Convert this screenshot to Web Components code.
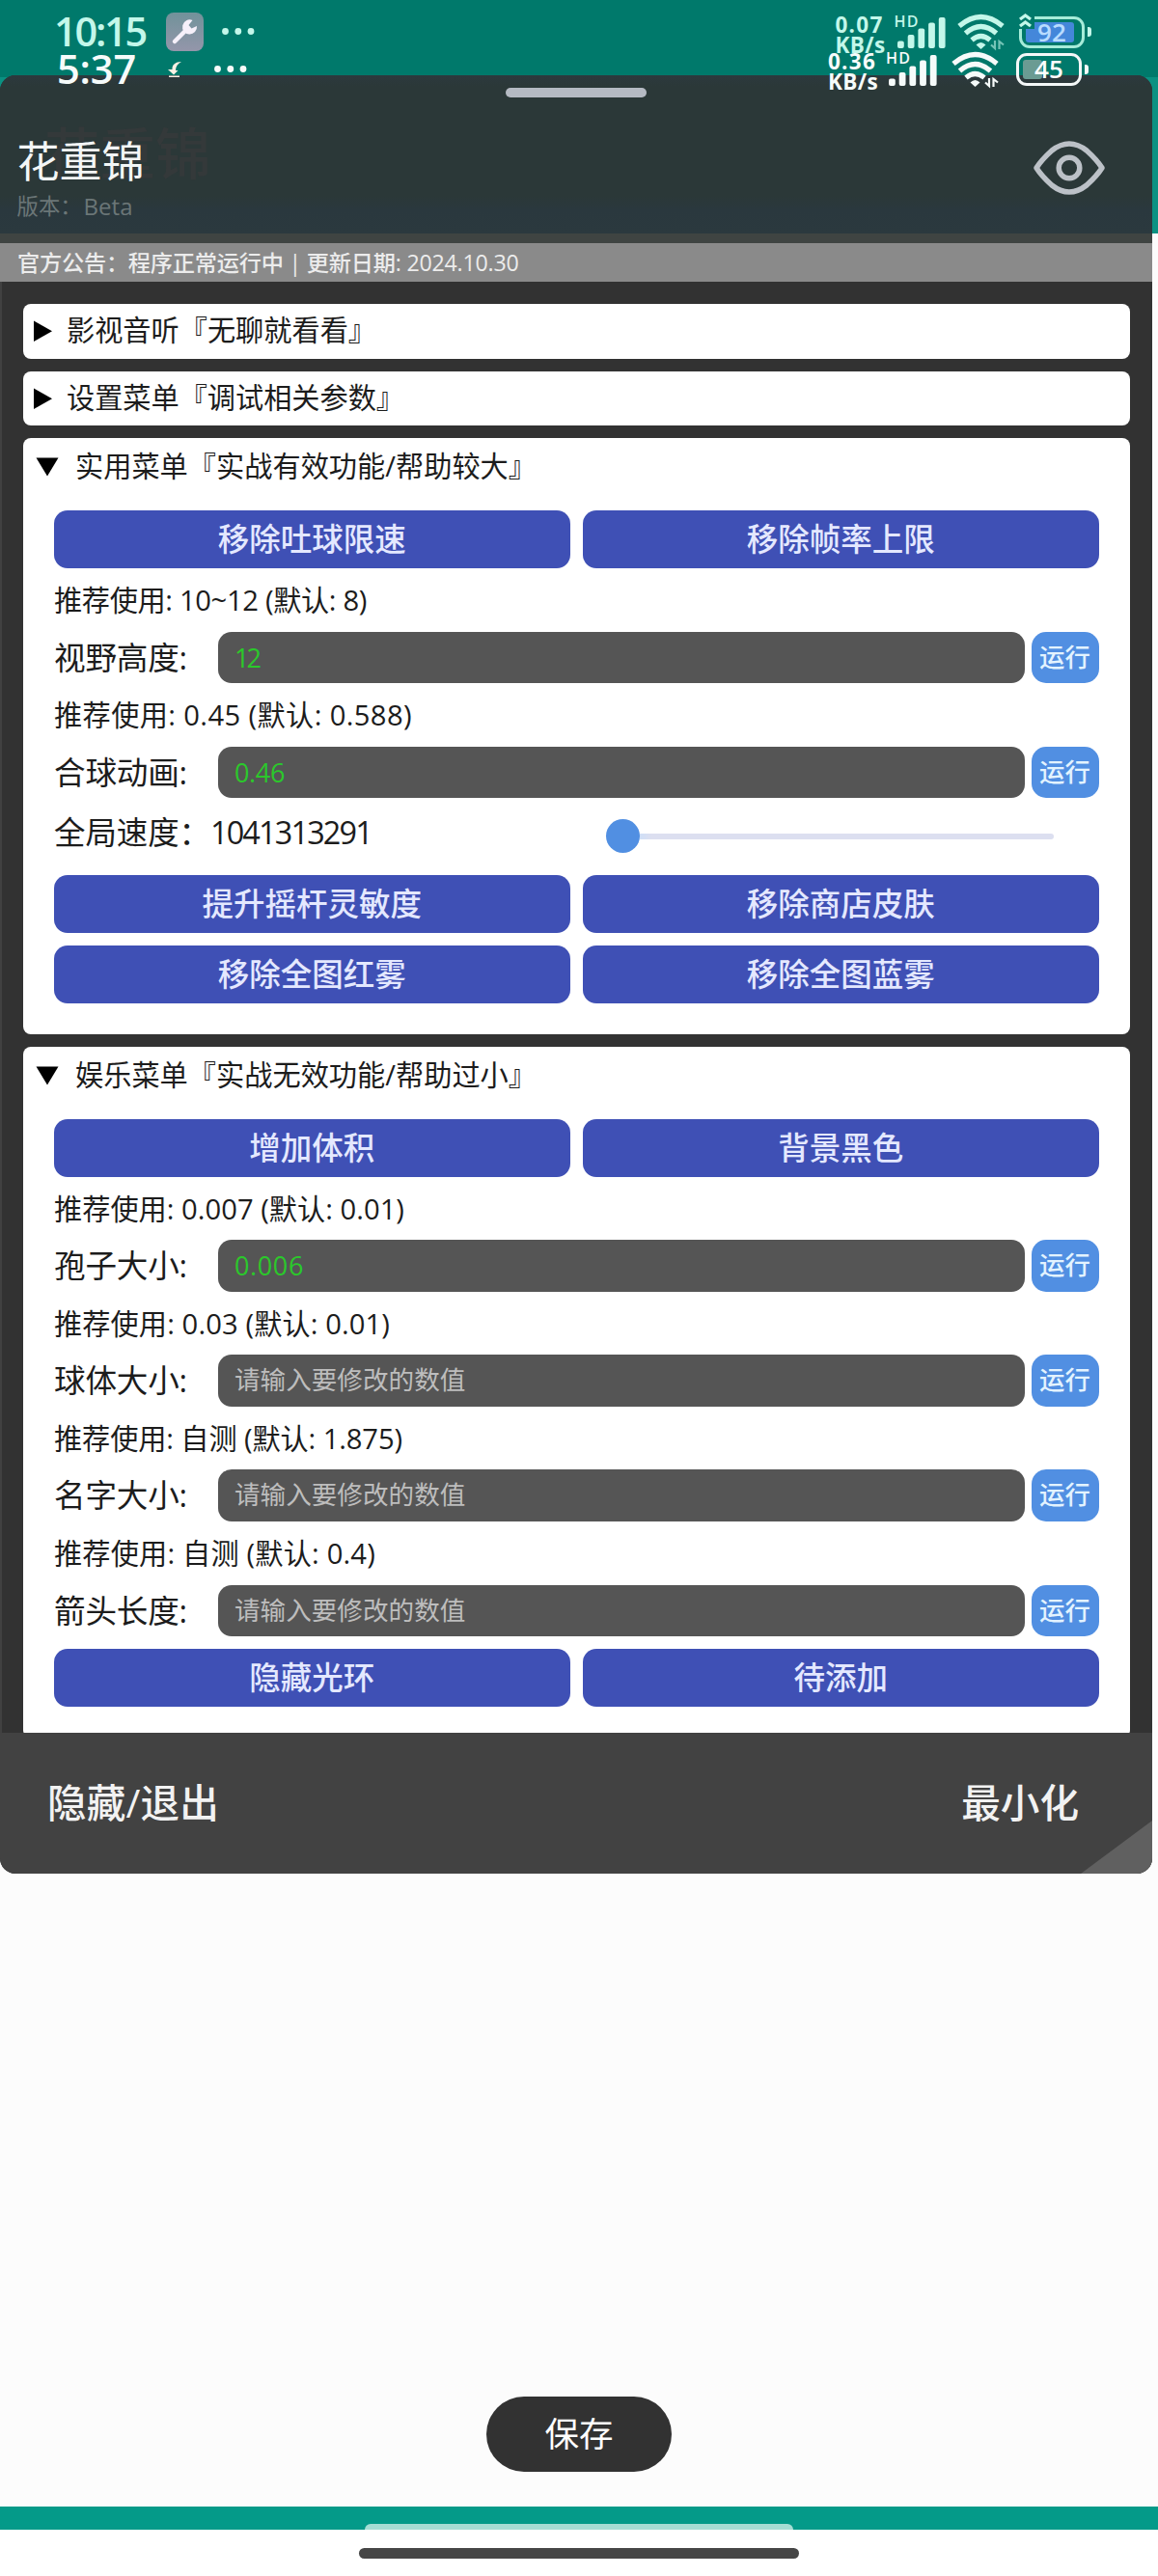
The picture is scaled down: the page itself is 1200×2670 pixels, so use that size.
<!DOCTYPE html>
<html lang="zh-CN">
<head>
<meta charset="utf-8">
<title>花重锦</title>
<style>
html,body{margin:0;padding:0}
body{width:1200px;height:2670px;overflow:hidden;background:#fff;font-family:"Open Sans","Noto Sans CJK SC",sans-serif}
</style>
</head>
<body>
<phone-screen>
  <app-backdrop slot="app">保存</app-backdrop>
  <float-panel slot="panel">
    <panel-header slot="header" version="版本：" channel="Beta">花重锦</panel-header>
    <notice-bar slot="notice"><fit-text w="519.5">官方公告：程序正常运行中 | 更新日期: 2024.10.30</fit-text></notice-bar>
    <menu-card heading="影视音听『无聊就看看』" w="321"></menu-card>
    <menu-card heading="设置菜单『调试相关参数』" w="350"></menu-card>
    <menu-card open heading="实用菜单『实战有效功能/帮助较大』" w="478">
      <button-pair a="移除吐球限速" b="移除帧率上限"></button-pair>
      <value-row hint="推荐使用: 10~12 (默认: 8)" hw="324" label="视野高度:" value="12" vw="25"></value-row>
      <value-row hint="推荐使用: 0.45 (默认: 0.588)" hw="371" label="合球动画:" value="0.46" vw="52"></value-row>
      <speed-row></speed-row>
      <button-pair a="提升摇杆灵敏度" b="移除商店皮肤"></button-pair>
      <button-pair class="next" a="移除全图红雾" b="移除全图蓝雾"></button-pair>
    </menu-card>
    <menu-card open heading="娱乐菜单『实战无效功能/帮助过小』" w="478">
      <button-pair a="增加体积" b="背景黑色"></button-pair>
      <value-row hint="推荐使用: 0.007 (默认: 0.01)" hw="363" label="孢子大小:" value="0.006" vw="72"></value-row>
      <value-row hint="推荐使用: 0.03 (默认: 0.01)" hw="348" label="球体大小:"></value-row>
      <value-row hint="推荐使用: 自测 (默认: 1.875)" hw="361" label="名字大小:"></value-row>
      <value-row hint="推荐使用: 自测 (默认: 0.4)" hw="333" label="箭头长度:"></value-row>
      <button-pair class="next" a="隐藏光环" b="待添加"></button-pair>
    </menu-card>
    <panel-footer slot="footer"></panel-footer>
  </float-panel>
  <status-bar slot="status" time="10:15" tw="95" rate="0.07" level="92" charging></status-bar>
  <status-bar slot="status" class="front" time="5:37" tw="82" rate="0.36" level="45"></status-bar>
</phone-screen>
<script>
const define = (name, render, after) => customElements.define(name, class extends HTMLElement {
  connectedCallback() {
    if (!this.shadowRoot) this.attachShadow({mode: 'open'}).innerHTML = render(this);
    if (after) after(this);
  }
});
const at = (el, n) => el.getAttribute(n) || '';

define('phone-screen', () => `<style>
:host{display:block;position:relative;width:1200px;height:2670px;overflow:hidden}
::slotted(float-panel){position:absolute;left:0;top:78px}
::slotted(status-bar){position:absolute;left:0;top:0}
::slotted(.front){top:38.5px}
</style><slot name="app"></slot><slot name="panel"></slot><slot name="status"></slot>`);

define('app-backdrop', () => `<style>
:host{display:flex;flex-direction:column;height:2670px}
.status{height:80px;background:#00796b}
.tool{height:162px;background:#0b9182}
.content{flex:1;background:#fcfcfc;display:flex;justify-content:center;align-items:flex-end;padding-bottom:36px}
.save{width:192px;height:78px;border-radius:39px;background:#323232;color:#fff;font-size:35.5px;line-height:76px;text-align:center}
.band{height:24px;background:#049a89;display:flex;justify-content:center;align-items:flex-end}
.band i{width:444px;height:6px;border-radius:6px 6px 0 0;background:#a5ddd4}
.nav{height:48px;background:#fff;display:flex;justify-content:center}
.nav i{width:456px;height:11px;margin-top:19px;border-radius:6px;background:#464646}
</style><div class="status"></div><div class="tool"></div><div class="content"><div class="save"><slot></slot></div></div><div class="band"><i></i></div><div class="nav"><i></i></div>`);

define('float-panel', () => `<style>
:host{display:flex;flex-direction:column;width:1194px;height:1864px;border-radius:16px;overflow:hidden;background:#323232}
.list{flex:1;min-height:0;overflow:hidden;display:flex;flex-direction:column;gap:13px;padding:23px 23.5px 0 22px;border-left:2px solid #414141}
</style><slot name="header"></slot><slot name="notice"></slot><div class="list"><slot></slot></div><slot name="footer"></slot>`);

define('panel-header', el => `<style>
:host{display:flex;flex-direction:column;position:relative;height:164px;background:linear-gradient(#2c393e 0,#2b3838 12px,#2b3838 125px,#2a383e 140px,#2b393e 100%);border-bottom:10px solid #3f4442;flex:none}
.grip{width:146px;height:10px;border-radius:5px;background:#b5bac3;margin:13px 0 0 524px}
.row{display:flex;justify-content:space-between;position:relative;z-index:1;padding:0 48px 0 17.5px;margin-top:38px}
.t{font-size:44px;line-height:56px;color:#f3f6f6;height:56px}
.v{display:flex;font-size:22.4px;line-height:32px;color:#6b7677;margin-top:3px;height:32px}
.v fit-text{font-size:24px}
.v span{width:69px}
.ghost{position:absolute;left:46px;top:41px;font-size:57.5px;line-height:80px;color:#34393a;font-weight:500}
svg{display:block;margin-top:5px}
</style><div class="ghost" aria-hidden="true">花重锦</div><div class="grip"></div>
<div class="row"><div><div class="t"><slot></slot></div><div class="v"><span>${at(el,'version')}</span><fit-text w="51">${at(el,'channel')}</fit-text></div></div>
<svg width="76" height="60" viewBox="0 0 76 60" fill="none" stroke="#bcc1c7" stroke-width="5.5" stroke-linejoin="round"><path d="M4 30Q9 22 20 12Q38-2 56 12Q67 22 72 30Q67 38 56 48Q38 62 20 48Q9 38 4 30Z"/><circle cx="38" cy="30" r="10.8"/></svg></div>`);

define('notice-bar', () => `<style>
:host{display:block;height:40px;line-height:40px;padding-left:18px;font-size:23.2px;font-weight:500;color:#ececec;background:#8a8a8a;flex:none;white-space:pre}
</style><slot></slot>`);

define('menu-card', el => {
  const open = el.hasAttribute('open');
  return `<style>
:host{display:block;background:#fff;border-radius:8px;flex:none;color:#1c1c1c}
.h{display:flex;align-items:center;font-size:29.2px;height:56.5px;line-height:56.5px}
:host([open]) .h{height:60px;line-height:60px}
.h fit-text{margin-top:-1.5px}
svg{flex:none;fill:#000}
.c{padding:15px 32px 31.5px}
::slotted(.next){margin-top:13px}
</style><div class="h">${open
 ? '<svg width="54" height="60"><path d="M13.5 20.5H36.5L25 39.5Z"/></svg>'
 : '<svg width="45" height="56"><path d="M11 17.5L30 28.2L11 39Z"/></svg>'}<fit-text w="${at(el,'w')}">${at(el,'heading')}</fit-text></div>${open ? '<div class="c"><slot></slot></div>' : ''}`;
});

define('button-pair', el => `<style>
:host{display:flex;gap:13.5px;height:60px}
div{flex:1;border-radius:14px;background:#3f50b5;color:#e4e8ff;font-size:32.5px;line-height:60px;text-align:center;font-weight:500}
</style><div>${at(el,'a')}</div><div>${at(el,'b')}</div>`);

define('value-row', el => `<style>
:host{display:block}
.hint{height:65.6px;line-height:66px;font-size:29.2px;white-space:pre}
.r{display:flex;height:53.5px;line-height:53px}
.l{width:170px;font-size:32.6px}
.i{flex:1;border-radius:14px;background:#555;font-size:26.6px;padding-left:17px;color:#bdbdbd}
.i.on{color:#2bc82b;font-size:27px}
.b{width:70px;margin-left:7px;border-radius:15px;background:#518fe2;color:#e3f3ff;font-size:26.4px;text-align:center;font-weight:500}
</style><div class="hint"><fit-text w="${at(el,'hw')}">${at(el,'hint')}</fit-text></div>
<div class="r"><div class="l"><fit-text w="138">${at(el,'label')}</fit-text></div>${at(el,'value')
 ? `<div class="i on"><fit-text w="${at(el,'vw')}">${at(el,'value')}</fit-text></div>`
 : '<div class="i">请输入要修改的数值</div>'}<div class="b">运行</div></div>`);

define('speed-row', () => `<style>
:host{display:flex;align-items:center;justify-content:space-between;height:80px}
.t{font-size:32.4px;line-height:71px;height:80px;display:flex;white-space:pre}
.s{display:flex;align-items:center;margin:-1px 47px 0 0}
.k{width:35px;height:35px;border-radius:50%;background:#518fe2}
.l{width:429px;height:6px;border-radius:0 3px 3px 0;background:linear-gradient(90deg,#cfdff7,#dcdff0 12px)}
</style><div class="t"><span>全局速度：</span><fit-text w="167">1041313291</fit-text></div><div class="s"><div class="k"></div><div class="l"></div></div>`);

define('panel-footer', () => `<style>
:host{display:flex;justify-content:space-between;height:146px;line-height:145px;padding:0 76px 0 49px;box-sizing:border-box;font-size:40.6px;font-weight:500;color:#f2f2f2;flex:none;background:#424242;position:relative}
svg{position:absolute;right:0;bottom:0}
</style><svg width="74" height="55"><path d="M0 55L74 0V55Z" fill="#606060"/></svg><fit-text w="178">隐藏/退出</fit-text><span>最小化</span>`);

define('status-bar', el => {
  const ch = el.hasAttribute('charging');
  const c = ch ? '#c3f7ea' : '#f6fbfa';
  const bars = [7.5, 14, 20.5, 26.5, 32].map((h, i) => `<rect x="${i * 10.7}" y="${33 - h}" width="6.8" height="${h}" rx="2"/>`).join('');
  const icon = ch
    ? `<svg class="app" width="39" height="40" viewBox="0 0 39 40"><defs><linearGradient id="g" x2="0" y2="1"><stop stop-color="#71929a"/><stop offset="1" stop-color="#9496aa"/></linearGradient></defs><rect width="39" height="40" rx="8" fill="url(#g)"/><path d="M9 30L22 17" stroke="#f6f0fa" stroke-width="4.5" stroke-linecap="round"/><path d="M27.5 8A7.5 7.5 0 1 0 32 14L26.5 16.5L23.5 13Z" fill="#f6f0fa"/></svg>`
    : `<svg class="app" width="15" height="17" viewBox="0 0 15 17" fill="#fff1e4"><path d="M14 0C8 0 4 3 4.5 8H0L6 13.5L10.5 9H8C8 5 10 2 14 0Z"/><rect x="1" y="14.5" width="11" height="1.5"/></svg>`;
  return `<style>
:host{display:flex;justify-content:space-between;width:1200px;height:60px;color:${c};font-weight:600;line-height:1}
.left,.right{display:flex;align-items:flex-start}
.time{font-size:41.5px;line-height:42px;margin:11px 0 0 ${ch ? 56 : 59}px;width:${ch ? 97 : 85}px}
.app{margin:${ch ? '13px 0 0 19px' : '25.5px 0 0 30px'}}
.dots{margin:${ch ? '28px 0 0 18px' : '28px 0 0 32px'}}
.right{padding-right:${ch ? 69.5 : 72.5}px}
.rate{width:${ch ? 62 : 61}px;font-size:22.5px;font-weight:700;line-height:21px;margin-top:14.5px}
.rate div{height:21px}
.sig{width:52px;margin-right:${ch ? 12 : 15}px;margin-top:13.5px}
.hd{font-size:16px;line-height:17px;height:3.5px;margin-left:-1px}
.sig svg{display:block;margin-left:2px}
.wifi{margin-top:15px;margin-right:${ch ? 15.5 : 18}px}
.bat{display:flex;align-items:center;margin-top:16.5px;position:relative}
.box{box-sizing:border-box;width:68px;height:33.5px;border:3px solid ${ch ? '#a6ecd9' : '#f4f8f8'};border-radius:11px;position:relative}
.fill{position:absolute;left:4px;top:3.5px;height:20.5px;width:${ch ? 50 : 20}px;border-radius:3px;background:${ch ? '#4487da' : '#6b9b93'}}
.n{position:relative;text-align:center;font-size:26px;line-height:27px;color:${ch ? '#b8dcff' : '#fff'}}
.nub{width:3.5px;height:10px;border-radius:0 3px 3px 0;background:${c};margin-left:3px}
.chev{position:absolute;left:-1px;top:-4px}
svg{overflow:visible}
</style>
<div class="left"><div class="time"><fit-text w="${at(el,'tw')}">${at(el,'time')}</fit-text></div>${icon}
<svg class="dots" width="34" height="9" fill="${c}"><circle cx="4.5" cy="4.5" r="3.4"/><circle cx="17.8" cy="4.5" r="3.4"/><circle cx="31" cy="4.5" r="3.4"/></svg></div>
<div class="right"><div class="rate"><div><fit-text w="50">${at(el,'rate')}</fit-text></div><div><fit-text w="52">KB/s</fit-text></div></div>
<div class="sig"><div class="hd"><fit-text w="26">HD</fit-text></div><svg width="50" height="33" fill="${c}">${bars}</svg></div>
<svg class="wifi" width="49" height="36" viewBox="0 0 49 36" fill="none" stroke="${c}" stroke-width="5.2"><path d="M2 12Q24.5-7 47 12"/><path d="M8.5 19.5Q24.5 5.5 40.5 19.5"/><path d="M15 26.5Q24.5 18.5 34 26.5"/><path d="M24.5 36L19.5 31.5Q24.5 26.5 29.5 31.5Z" fill="${c}" stroke="none"/><g stroke-width="2.2" opacity="${ch ? .6 : 1}"><path d="M39 27V35L35 31.5M43.5 36V28L48 31.5"/></g></svg>
<div class="bat"><div class="box"><div class="fill"></div><div class="n"><fit-text w="30">${at(el,'level')}</fit-text></div></div><div class="nub"></div>${ch ? `<svg class="chev" width="16" height="17"><rect width="17" height="17" fill="#00796b"/><path d="M2 7L7.5 3L13 7M2 14L7.5 10L13 14" fill="none" stroke="${c}" stroke-width="3.4"/></svg>` : ''}</div></div>`;
});

/* Spreads its text evenly over the advance width given in w. */
define('fit-text', () => `<style>:host{display:inline-block;white-space:pre}span{display:inline-block}</style><span><slot></slot></span>`, el => {
  const s = el.shadowRoot.querySelector('span'), w = +el.getAttribute('w');
  s.style.letterSpacing = '0';
  const n = [...el.textContent].length;
  s.style.letterSpacing = ((w - s.getBoundingClientRect().width) / n) + 'px';
});
</script>
</body>
</html>
